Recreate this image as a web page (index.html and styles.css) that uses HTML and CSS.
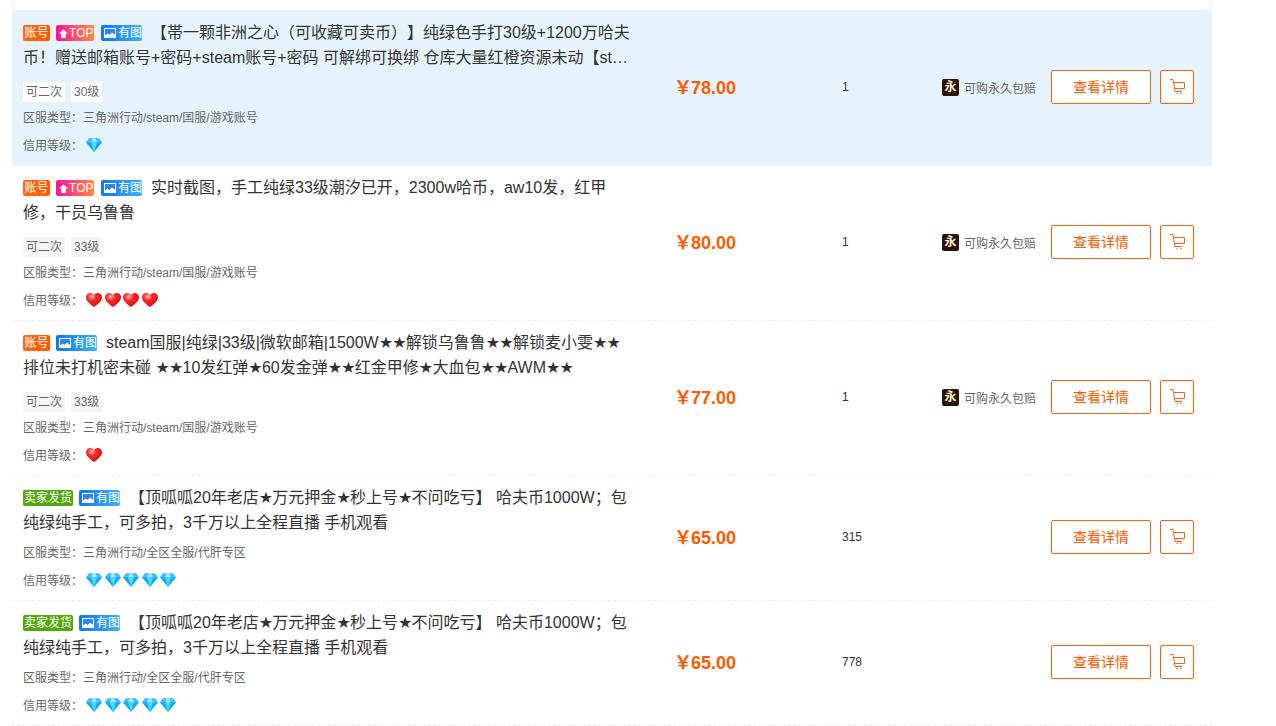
FILE: index.html
```html
<!DOCTYPE html>
<html>
<head>
    <meta charset="utf-8">
    <title>商品列表</title>
    <link rel="stylesheet" href="styles.css">
</head>
<body>
    <svg class="defs" width="0" height="0">
        <defs>
            <radialGradient id="heartFill" cx="0.36" cy="0.26" r="0.8">
                <stop offset="0" stop-color="#ffb4b4"/>
                <stop offset="0.35" stop-color="#f82a2a"/>
                <stop offset="1" stop-color="#d60808"/>
            </radialGradient>
            <symbol id="gem" viewBox="0 0 16 14">
                <path d="M3 0.500h10l3 4-8 9.500-8-9.500z" fill="#12a8f8"/>
                <path d="M3 0.500h3.500L5 4.500H0zM13 0.500H9.500L11 4.500h5z" fill="#45bdfb"/>
                <path d="M6.500 0.500h3L11 4.500H5z" fill="#a5e6ff"/>
                <path d="M5 4.500h6L8 14z" fill="#45dcff"/>
            </symbol>
            <symbol id="heart" viewBox="0 0 16 14">
                <path d="M8 14C3 10.500 0 7.800 0 4.300 0 1.800 1.900 0 4.200 0 5.800 0 7.200 0.800 8 2.200 8.800 0.800 10.200 0 11.800 0 14.100 0 16 1.800 16 4.300 16 7.800 13 10.500 8 14z" fill="url(#heartFill)"/>
            </symbol>
            <symbol id="cart" viewBox="0 0 16 16">
                <path d="M1 0.500h3l2 12h7M4.500 3.500h11v6H5.500" fill="none" stroke="#ff6010" stroke-width="1"/>
                <path d="M7.500 14.500h1.300M11 14.500h1.300" fill="none" stroke="#ff6010" stroke-width="1"/>
            </symbol>
            <symbol id="pic" viewBox="0 0 12 12">
                <path d="M0 1h12v10H0z" fill="#fff"/>
                <path d="M1 2h10v6L8 5.500 5.500 8 3.500 6.500 1 8.500z" fill="#2a86f5"/>
            </symbol>
        </defs>
    </svg>

    <div class="list">
        <div class="list-head"></div>

        <div class="row row-on">
            <div class="info">
                <div class="title">
                    <span class="tag tag-acc">账号</span><span class="tag tag-top"><i class="top-arrow"></i>TOP</span><span class="tag tag-pic"><svg class="pic"><use href="#pic"/></svg>有图</span><span class="title-txt">【帯一颗非洲之心（可收藏可卖币）】纯绿色手打30级+1200万哈夫币！赠送邮箱账号+密码+steam账号+密码 可解绑可换绑 仓库大量红橙资源未动【st…</span>
                </div>
                <div class="chips"><span class="chip">可二次</span><span class="chip">30级</span></div>
                <div class="meta">区服类型：三角洲行动/steam/国服/游戏账号</div>
                <div class="meta">信用等级：<span class="levels"><svg class="lv"><use href="#gem"/></svg></span></div>
            </div>
            <div class="price"><span class="yen">￥</span>78.00</div>
            <div class="count">1</div>
            <div class="promise"><span class="promise-ico">永</span>可购永久包赔</div>
            <a class="btn-detail">查看详情</a>
            <a class="btn-cart"><svg class="cart"><use href="#cart"/></svg></a>
        </div>

        <div class="row">
            <div class="info">
                <div class="title">
                    <span class="tag tag-acc">账号</span><span class="tag tag-top"><i class="top-arrow"></i>TOP</span><span class="tag tag-pic"><svg class="pic"><use href="#pic"/></svg>有图</span><span class="title-txt">实时截图，手工纯绿33级潮汐已开，2300w哈币，aw10发，红甲修，干员乌鲁鲁</span>
                </div>
                <div class="chips"><span class="chip">可二次</span><span class="chip">33级</span></div>
                <div class="meta">区服类型：三角洲行动/steam/国服/游戏账号</div>
                <div class="meta">信用等级：<span class="levels"><svg class="lv"><use href="#heart"/></svg><svg class="lv"><use href="#heart"/></svg><svg class="lv"><use href="#heart"/></svg><svg class="lv"><use href="#heart"/></svg></span></div>
            </div>
            <div class="price"><span class="yen">￥</span>80.00</div>
            <div class="count">1</div>
            <div class="promise"><span class="promise-ico">永</span>可购永久包赔</div>
            <a class="btn-detail">查看详情</a>
            <a class="btn-cart"><svg class="cart"><use href="#cart"/></svg></a>
        </div>

        <div class="row">
            <div class="info">
                <div class="title">
                    <span class="tag tag-acc">账号</span><span class="tag tag-pic"><svg class="pic"><use href="#pic"/></svg>有图</span><span class="title-txt">steam国服|纯绿|33级|微软邮箱|1500W<span class="star">★★</span>解锁乌鲁鲁<span class="star">★★</span>解锁麦小雯<span class="star">★★</span>排位未打机密未碰 <span class="star">★★</span>10发红弹<span class="star">★</span>60发金弹<span class="star">★★</span>红金甲修<span class="star">★</span>大血包<span class="star">★★</span>AWM<span class="star">★★</span></span>
                </div>
                <div class="chips"><span class="chip">可二次</span><span class="chip">33级</span></div>
                <div class="meta">区服类型：三角洲行动/steam/国服/游戏账号</div>
                <div class="meta">信用等级：<span class="levels"><svg class="lv"><use href="#heart"/></svg></span></div>
            </div>
            <div class="price"><span class="yen">￥</span>77.00</div>
            <div class="count">1</div>
            <div class="promise"><span class="promise-ico">永</span>可购永久包赔</div>
            <a class="btn-detail">查看详情</a>
            <a class="btn-cart"><svg class="cart"><use href="#cart"/></svg></a>
        </div>

        <div class="row">
            <div class="info">
                <div class="title">
                    <span class="tag tag-sell">卖家发货</span><span class="tag tag-pic"><svg class="pic"><use href="#pic"/></svg>有图</span><span class="title-txt">【顶呱呱20年老店<span class="star">★</span>万元押金<span class="star">★</span>秒上号<span class="star">★</span>不问吃亏】 哈夫币1000W；包纯绿纯手工，可多拍，3千万以上全程直播 手机观看</span>
                </div>
                <div class="meta meta-first">区服类型：三角洲行动/全区全服/代肝专区</div>
                <div class="meta">信用等级：<span class="levels"><svg class="lv"><use href="#gem"/></svg><svg class="lv"><use href="#gem"/></svg><svg class="lv"><use href="#gem"/></svg><svg class="lv"><use href="#gem"/></svg><svg class="lv"><use href="#gem"/></svg></span></div>
            </div>
            <div class="price"><span class="yen">￥</span>65.00</div>
            <div class="count">315</div>
            <div class="promise"></div>
            <a class="btn-detail">查看详情</a>
            <a class="btn-cart"><svg class="cart"><use href="#cart"/></svg></a>
        </div>

        <div class="row">
            <div class="info">
                <div class="title">
                    <span class="tag tag-sell">卖家发货</span><span class="tag tag-pic"><svg class="pic"><use href="#pic"/></svg>有图</span><span class="title-txt">【顶呱呱20年老店<span class="star">★</span>万元押金<span class="star">★</span>秒上号<span class="star">★</span>不问吃亏】 哈夫币1000W；包纯绿纯手工，可多拍，3千万以上全程直播 手机观看</span>
                </div>
                <div class="meta meta-first">区服类型：三角洲行动/全区全服/代肝专区</div>
                <div class="meta">信用等级：<span class="levels"><svg class="lv"><use href="#gem"/></svg><svg class="lv"><use href="#gem"/></svg><svg class="lv"><use href="#gem"/></svg><svg class="lv"><use href="#gem"/></svg><svg class="lv"><use href="#gem"/></svg></span></div>
            </div>
            <div class="price"><span class="yen">￥</span>65.00</div>
            <div class="count">778</div>
            <div class="promise"></div>
            <a class="btn-detail">查看详情</a>
            <a class="btn-cart"><svg class="cart"><use href="#cart"/></svg></a>
        </div>
    </div>
</body>
</html>
```

FILE: styles.css
```css
* {
 box-sizing: border-box; }
html, body {
 height: 726px;
 overflow: hidden; }
body {
 margin: 0;
 background: #fff;
 color: #333;
 font-family: "Liberation Sans", "DejaVu Sans", "Noto Sans CJK SC", sans-serif;
 text-spacing-trim: space-all; }
.defs {
 display: block;
 height: 0; }
.list {
 width: 1200px;
 margin-left: 12px; }
.list-head {
 height: 11px;
 border: 1px solid #f0f0f0;
 border-top: 0; }
.row {
 display: grid;
 grid-template-columns: 653px 166px 100px 109px 100px 34px;
 align-items: center;
 padding: 3px 18px 5px 11px;
 border-bottom: 1px dashed #eee; }
.row-on {
 background: #e6f3fd; }

.info {
 padding: 6px 41px 0 0; }
.title {
 height: 50px;
 font-size: 16px;
 line-height: 25px;
 color: #333;
 overflow: hidden; }
.title-txt {
 margin-left: 3px; }
.star {
 letter-spacing: -0.8px; }
.tag {
 display: inline-block;
 height: 16px;
 line-height: 16px;
 margin-right: 6px;
 padding: 0 1.500px;
 border-radius: 2px;
 font-size: 12px;
 color: #fff;
 vertical-align: 1px;
 white-space: nowrap; }
.tag-acc {
 background: linear-gradient(90deg, #ff6a13, #ff5a00); }
.tag-top {
 width: 38px;
 margin-right: 7px;
 padding: 0 0 0 3px;
 background: linear-gradient(90deg, #ff1493, #ff8a45); }
.tag-pic {
 width: 41px;
 padding: 0 3px;
 background: linear-gradient(90deg, #0f78f5, #3eb0f7); }
.tag-sell {
 width: 50px;
 padding: 0;
 text-align: center;
 background: #52a80a; }
.top-arrow {
 display: inline-block;
 width: 9px;
 height: 10px;
 margin-right: 1px;
 vertical-align: -1px;
 background: #fff;
 clip-path: polygon(50% 15%, 100% 55%, 75% 55%, 75% 100%, 25% 100%, 25% 55%, 0 55%); }
.pic {
 width: 12px;
 height: 12px;
 margin-right: 2px;
 vertical-align: -2px; }

.chips {
 display: flex;
 gap: 6px;
 height: 19px;
 margin: 12px 0 3px; }
.chip {
 height: 20px;
 line-height: 20px;
 padding: 0 3px;
 font-size: 12px;
 color: #666;
 background: #f5f5f5; }
.row-on .chip {
 background: #fff; }
.meta {
 height: 28px;
 line-height: 28px;
 font-size: 12px;
 color: #666;
 white-space: nowrap; }
.meta-first {
 margin-top: 4px; }
.levels {
 display: inline-flex;
 gap: 2.500px;
 margin-left: 3px;
 vertical-align: -2px; }
.lv {
 width: 16px;
 height: 14px; }

.price {
 margin: -2px 0 0 -2px;
 font-size: 18px;
 font-weight: bold;
 color: #ff5a00; }
.yen {
 margin-right: -1px; }
.count {
 font-size: 12px;
 color: #333; }
.promise {
 display: flex;
 align-items: center;
 font-size: 12px;
 color: #666; }
.promise-ico {
 width: 17px;
 height: 17px;
 line-height: 17px;
 margin-right: 5px;
 border-radius: 2px;
 text-align: center;
 font-weight: bold;
 color: #fbeacb;
 background: #2a1206; }
.btn-detail {
 width: 100px;
 height: 34px;
 line-height: 32px;
 text-align: center;
 font-size: 14px;
 color: #ff5a00;
 background: #fff;
 border: 1px solid #ff6010;
 border-radius: 2px; }
.btn-cart {
 display: flex;
 align-items: center;
 justify-content: center;
 width: 34px;
 height: 34px;
 margin-left: 9px;
 background: #fff;
 border: 1px solid #ff6010;
 border-radius: 2px; }
.cart {
 width: 16px;
 height: 16px; }
```
